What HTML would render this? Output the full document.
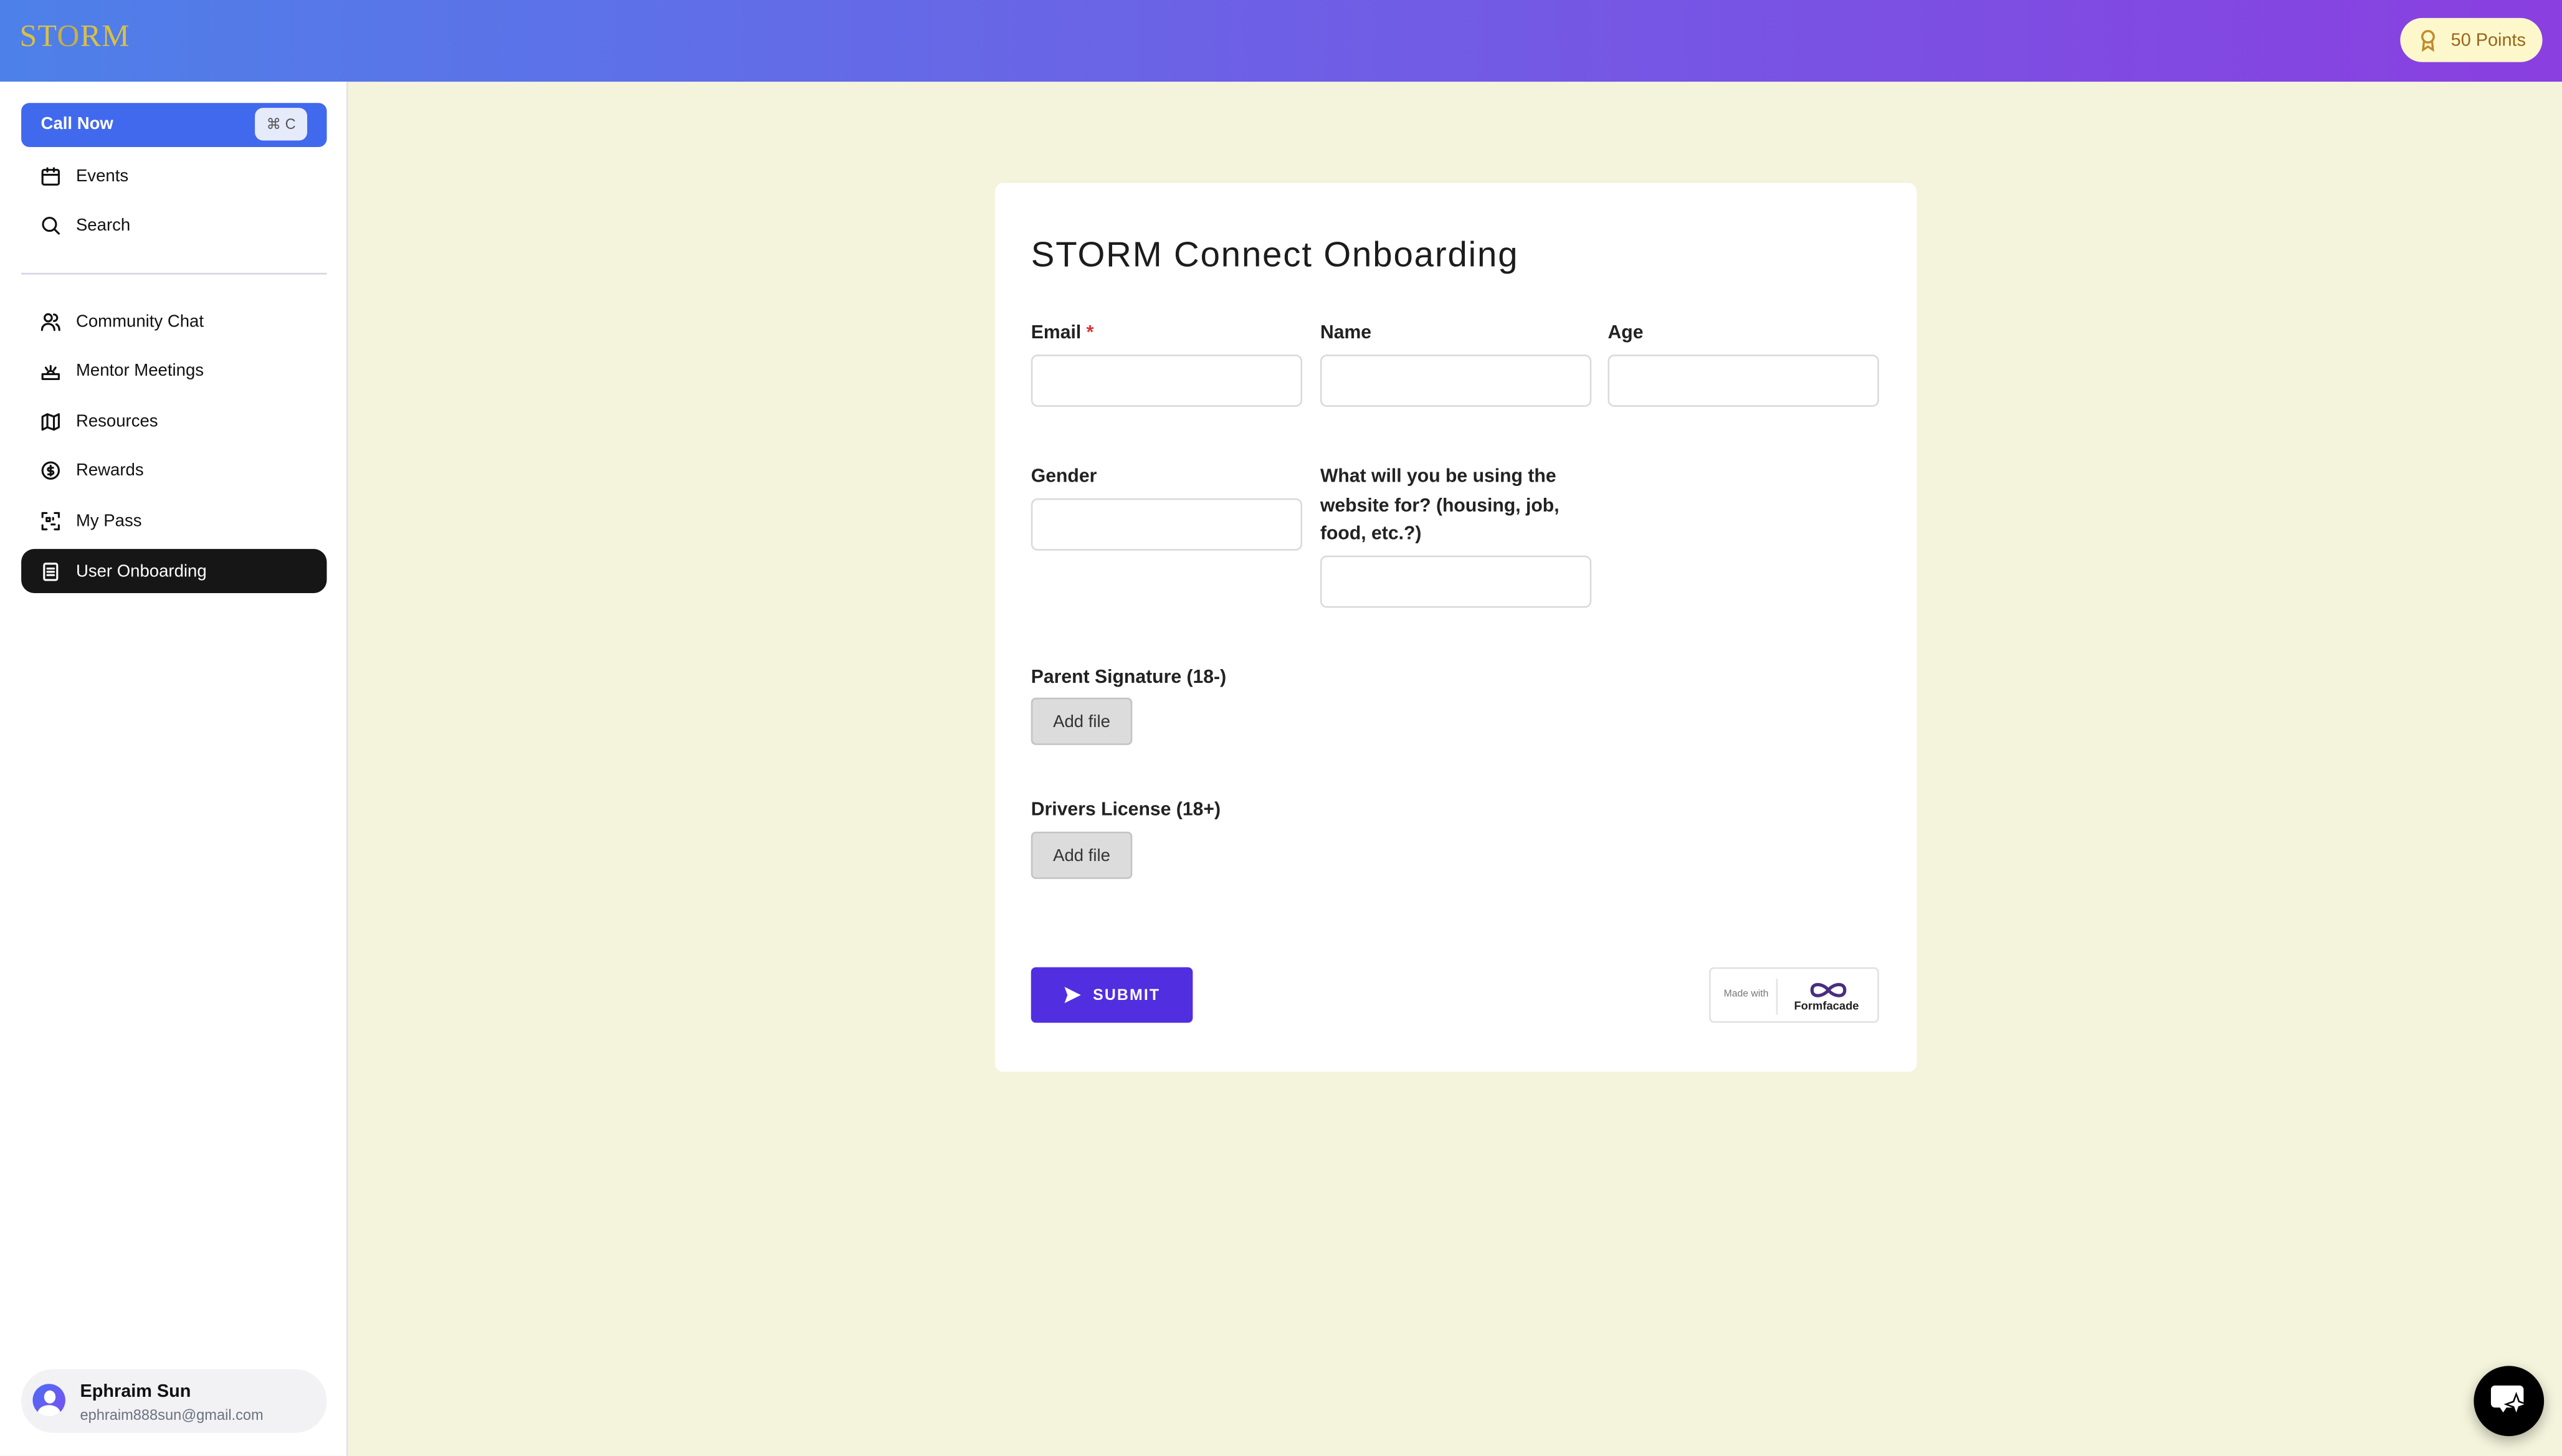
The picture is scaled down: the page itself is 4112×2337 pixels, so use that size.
<!DOCTYPE html>
<html><head><meta charset="utf-8"><style>
*{box-sizing:border-box;margin:0;padding:0}
html,body{width:4112px;height:2336px;overflow:hidden;background:#f4f4dc}
#w{position:absolute;left:0;top:0;width:1568px;height:891px;transform:scale(2.62245);transform-origin:0 0;font-family:"Liberation Sans",sans-serif;color:#111}
.hdr{position:absolute;left:0;top:0;width:1568px;height:50px;background:linear-gradient(90deg,#4e80e9,#6b63e6 45%,#8a3fe0)}
.side{position:absolute;left:0;top:50px;width:213px;height:841px;background:#fff;border-right:1px solid #e2e2e2}
.abs{position:absolute}
.nav{position:absolute;left:13px;width:187px;height:27px;font-size:10.5px;display:flex;align-items:center;padding-left:12px}
.nav svg{width:12px;height:12px;margin-right:9.5px;fill:none;stroke:#111;stroke-width:1.2;stroke-linecap:round;stroke-linejoin:round}
.card{position:absolute;left:609px;top:112px;width:564px;height:544px;background:#fff;border-radius:5px}
.lbl{position:absolute;font-size:11.5px;font-weight:bold;color:#222;line-height:17.5px}
.inp{position:absolute;width:166px;height:32px;border:1px solid #dadada;border-radius:4px;background:#fff}
.file{position:absolute;left:631px;width:62px;height:29px;background:#dcdcdc;border:1px solid #c4c4c4;border-radius:3px;font-size:10.5px;color:#333;display:flex;align-items:center;justify-content:center}
</style></head><body><div id="w">
<div class="hdr">
 <div class="abs" style="left:12px;top:12px;font-family:'Liberation Serif',serif;font-size:19px;color:#d8c048;letter-spacing:0.5px">ST<span style="color:#c9b040">O</span>RM</div>
 <div class="abs" style="left:1469px;top:11px;width:87px;height:27px;background:#fdf8cc;border-radius:14px;font-size:11px;color:#9a6418;display:flex;align-items:center;padding-left:11px">
  <svg width="12" height="14" viewBox="0 0 12 14" style="margin-right:8px" fill="none" stroke="#c08a28" stroke-width="1.3"><circle cx="6" cy="4.5" r="3.5"/><path d="M3.5 7.5 L3 12.5 L6 10.5 L9 12.5 L8.5 7.5"/></svg>50 Points</div>
</div>
<div class="side">
 <div class="abs" style="left:13px;top:13px;width:187px;height:27px;background:#4169ee;border-radius:5px;color:#fff;font-size:10.5px;font-weight:bold;padding-left:12px;line-height:27px">Call Now
  <div class="abs" style="left:143px;top:3px;width:32px;height:20px;background:#e6ebfb;border-radius:5px;color:#555;font-weight:normal;font-size:9px;line-height:20px;text-align:center">⌘ C</div></div>
 <div class="nav" style="top:44px"><svg viewBox="0 0 12 12"><rect x="1" y="2" width="10" height="9" rx="1"/><path d="M1 5h10M4 1v2M8 1v2"/></svg>Events</div>
 <div class="nav" style="top:74px"><svg viewBox="0 0 12 12"><circle cx="5.3" cy="5.3" r="4"/><path d="M8.3 8.3L11 11"/></svg>Search</div>
 <div class="abs" style="left:13px;top:117px;width:187px;height:1px;background:#d4d6e4"></div>
 <div class="nav" style="top:133px"><svg viewBox="0 0 12 12"><circle cx="4.5" cy="3.5" r="2.2"/><path d="M0.7 11c0-2.5 1.8-3.8 3.8-3.8s3.8 1.3 3.8 3.8M8 1.5a2 2 0 010 4M9.5 7.5c1 .5 1.8 1.6 1.8 3.5"/></svg>Community Chat</div>
 <div class="nav" style="top:163px"><svg viewBox="0 0 12 12"><path d="M1 11V8h10v3zM4 8a2 2 0 014 0M3 4l1 1.5M6 3v2M9 4l-1 1.5"/></svg>Mentor Meetings</div>
 <div class="nav" style="top:194px"><svg viewBox="0 0 12 12"><path d="M1 3l3-1.5 4 1.5 3-1.5v8l-3 1.5-4-1.5L1 11zM4 1.5v8M8 3v8"/></svg>Resources</div>
 <div class="nav" style="top:224px"><svg viewBox="0 0 12 12"><circle cx="6" cy="6" r="5"/><path d="M7.5 4.3H5.3a1 1 0 000 2h1.4a1 1 0 010 2H4.5M6 3v6"/></svg>Rewards</div>
 <div class="nav" style="top:255px"><svg viewBox="0 0 12 12"><path d="M1 3.5V1h2.5M8.5 1H11v2.5M11 8.5V11H8.5M3.5 11H1V8.5M3.5 4h2v2h-2zM7.5 4v1M6.5 8h2"/></svg>My Pass</div>
 <div class="nav" style="top:286px;background:#161616;color:#fff;border-radius:8px"><svg viewBox="0 0 12 12" style="stroke:#fff"><rect x="2" y="1" width="8" height="10" rx="1"/><path d="M4 4h4M4 6h4M4 8h4"/></svg>User Onboarding</div>
 <div class="abs" style="left:13px;top:788px;width:187px;height:39px;background:#f2f2f5;border-radius:20px">
  <div class="abs" style="left:7px;top:9px;width:20px;height:20px;border-radius:50%;background:linear-gradient(135deg,#4c6ef5,#7a4ff0);overflow:hidden">
   <div class="abs" style="left:6.5px;top:4px;width:7px;height:8px;border-radius:50%;background:#fff"></div>
   <div class="abs" style="left:3px;top:13px;width:14px;height:10px;border-radius:50%;background:#fff"></div></div>
  <div class="abs" style="left:36px;top:8px;font-size:11px;font-weight:bold;color:#111">Ephraim Sun</div>
  <div class="abs" style="left:36px;top:23px;font-size:9px;color:#6b7280">ephraim888sun@gmail.com</div>
 </div>
</div>
<div class="card"></div>
<div class="abs" style="left:631px;top:144px;font-size:21.5px;color:#1c1c1c;letter-spacing:0.7px">STORM Connect Onboarding</div>
<div class="lbl" style="left:631px;top:196px">Email <span style="color:#d33">*</span></div>
<div class="lbl" style="left:808px;top:196px">Name</div>
<div class="lbl" style="left:984px;top:196px">Age</div>
<div class="inp" style="left:631px;top:217px"></div>
<div class="inp" style="left:808px;top:217px"></div>
<div class="inp" style="left:984px;top:217px"></div>
<div class="lbl" style="left:631px;top:284px">Gender</div>
<div class="lbl" style="left:808px;top:284px;width:160px">What will you be using the website for? (housing, job, food, etc.?)</div>
<div class="inp" style="left:631px;top:305px"></div>
<div class="inp" style="left:808px;top:340px"></div>
<div class="lbl" style="left:631px;top:407px">Parent Signature (18-)</div>
<div class="file" style="top:427px">Add file</div>
<div class="lbl" style="left:631px;top:488px">Drivers License (18+)</div>
<div class="file" style="top:509px">Add file</div>
<div class="abs" style="left:631px;top:592px;width:99px;height:34px;background:#512ee0;border-radius:3px;color:#fff;font-size:9.5px;font-weight:bold;letter-spacing:0.8px;display:flex;align-items:center;justify-content:center">
 <svg width="11" height="10" viewBox="0 0 11 11" style="margin-right:7px"><path d="M0 0L11 5.5 0 11 2 5.5z" fill="#fff"/></svg>SUBMIT</div>
<div class="abs" style="left:1046px;top:592px;width:104px;height:34px;border:1px solid #e2e2e2;border-radius:3px;background:#fff">
 <div class="abs" style="left:8px;top:13px;font-size:6px;color:#777">Made with</div>
 <div class="abs" style="left:40px;top:6px;width:1px;height:22px;background:#e4e4e4"></div>
 <svg class="abs" style="left:59px;top:7px" width="26" height="12" viewBox="0 0 26 12"><path d="M13 6C10 2 3 1 3 6s7 4 10 0c3-4 10-5 10 0s-7 4-10 0" fill="none" stroke="#4a2d80" stroke-width="2"/></svg>
 <div class="abs" style="left:51px;top:20px;font-size:7px;font-weight:bold;color:#222">Formfacade</div>
</div>
<div class="abs" style="left:1514px;top:836px;width:43px;height:43px;border-radius:50%;background:#000;box-shadow:0 3px 8px rgba(0,0,0,.3)">
 <svg class="abs" style="left:10px;top:11px" width="24" height="22" viewBox="0 0 24 22"><path d="M3 1h15a2.5 2.5 0 012.5 2.5V12A2.5 2.5 0 0118 14.5H10l-2 3-2-3H3A2.5 2.5 0 01.5 12V3.5A2.5 2.5 0 013 1z" fill="#fff"/><path d="M16 7l1.5 4 4 1.5-4 1.5-1.5 4-1.5-4-4-1.5 4-1.5z" fill="#000" stroke="#000" stroke-width="1.5"/><path d="M16 7.5l1.3 3.7 3.7 1.3-3.7 1.3-1.3 3.7-1.3-3.7-3.7-1.3 3.7-1.3z" fill="#fff"/></svg>
</div>
</div></body></html>
